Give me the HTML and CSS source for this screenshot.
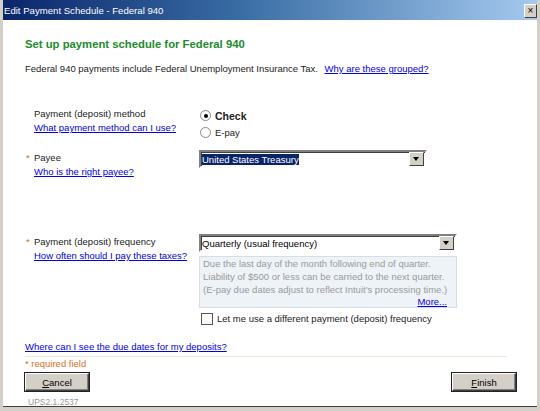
FILE: index.html
```html
<!DOCTYPE html>
<html lang="en">
  <head>
    <meta charset="UTF-8" />
    <title>Edit Payment Schedule - Federal 940</title>
    <link rel="stylesheet" href="styles.css">
  </head>
  <body>
    <div class="window">
      <div class="titlebar">
        <span class="title">Edit Payment Schedule - Federal 940</span>
        <span class="close">&#215;</span>
      </div>

      <div class="content">
        <h1>Set up payment schedule for Federal 940</h1>
        <p class="intro">Federal 940 payments include Federal Unemployment Insurance Tax. <a href="#">Why are these grouped?</a></p>

        <div class="row method">
          <div class="label">
            <span>Payment (deposit) method</span>
            <a href="#">What payment method can I use?</a>
          </div>
          <div class="field">
            <div class="radio checked"><span class="dot"></span><b>Check</b></div>
            <div class="radio"><span class="dot"></span>E-pay</div>
          </div>
        </div>

        <div class="row payee">
          <div class="label">
            <span><i class="req">*</i>Payee</span>
            <a href="#">Who is the right payee?</a>
          </div>
          <div class="field">
            <div class="select short">
              <span class="value"><span class="hl">United States Treasury</span></span>
              <span class="arrow"></span>
            </div>
          </div>
        </div>

        <div class="row freq">
          <div class="label">
            <span><i class="req">*</i>Payment (deposit) frequency</span>
            <a href="#">How often should I pay these taxes?</a>
          </div>
          <div class="field">
            <div class="select">
              <span class="value">Quarterly (usual frequency)</span>
              <span class="arrow"></span>
            </div>
            <div class="info">
              <p>Due the last day of the month following end of quarter.</p>
              <p>Liability of $500 or less can be carried to the next quarter.</p>
              <p>(E-pay due dates adjust to reflect Intuit's processing time.)</p>
              <a href="#" class="more">More...</a>
            </div>
            <div class="check"><span class="box"></span>Let me use a different payment (deposit) frequency</div>
          </div>
        </div>

        <a href="#" class="due">Where can I see the due dates for my deposits?</a>
      </div>

      <div class="footer">
        <div class="required">* required field</div>
        <div class="buttons">
          <button><u>C</u>ancel</button>
          <button><u>F</u>inish</button>
        </div>
        <div class="version">UPS2.1.2537</div>
      </div>
    </div>
  </body>
</html>
```

FILE: styles.css
```css
body {
  margin: 0;
  padding: 0;
  font-family: "Liberation Sans", Arial, sans-serif;
  font-size: 9.5px;
  color: #222;
  background-color: white;
}

.window {
  width: 540px;
  height: 411px;
  box-sizing: border-box;
  border-left: 3px solid #d4d0c8;
  border-right: 3px solid #d4d0c8;
  border-bottom: 4px solid #d4d0c8;
  box-shadow: inset 0 -1px 0 #404040;
  background-color: white;
  overflow: hidden;
}

.titlebar {
  height: 20px;
  margin: 0 -3px;
  background: linear-gradient(to right, #0a246a, #3a6ea5 45%, #a6caf0);
  color: white;
  display: flex;
  align-items: center;
  justify-content: space-between;
  padding: 0 3px 0 4px;
}

.title {
  font-size: 9.6px;
}

.close {
  width: 11px;
  height: 12px;
  background-color: #d4d0c8;
  border: 1px solid;
  border-color: white #404040 #404040 white;
  color: black;
  font-size: 10px;
  line-height: 11px;
  text-align: center;
  margin-top: 2px;
}

.content {
  padding: 0 0 0 22px;
}

h1 {
  color: #1c8c2c;
  font-size: 11.3px;
  margin: 16px 0 0;
  line-height: 16px;
}

.intro {
  margin: 10px 0 0;
  line-height: 14px;
}

.intro a {
  margin-left: 4px;
}

a {
  color: #0000ee;
}

.row {
  display: flex;
}

.label {
  width: 165px;
  display: flex;
  flex-direction: column;
  align-items: flex-start;
  padding-left: 9px;
  line-height: 14px;
}

.req {
  font-style: normal;
  color: #e07020;
  margin-left: -8px;
  width: 8px;
  display: inline-block;
}

.method {
  margin-top: 31px;
}

.radio {
  display: flex;
  align-items: center;
  height: 17px;
  gap: 4px;
}

.radio b {
  font-size: 10.5px;
}

.dot {
  width: 9px;
  height: 9px;
  border-radius: 50%;
  border: 1px solid #888;
  background: white;
  position: relative;
  margin-left: 1px;
}

.checked .dot::after {
  content: "";
  position: absolute;
  left: 2.5px;
  top: 2.5px;
  width: 4px;
  height: 4px;
  border-radius: 50%;
  background: black;
}

.payee {
  margin-top: 9px;
}

.payee .label {
  padding-top: 1px;
}

.select {
  width: 258px;
  height: 18px;
  box-sizing: border-box;
  border: 2px solid;
  border-color: #808080 white white #808080;
  box-shadow: inset 1px 1px 0 #404040;
  display: flex;
  align-items: center;
  background: white;
  color: black;
}

.select.short {
  width: 228px;
}

.value {
  flex: 1;
  padding-left: 1px;
}

.hl {
  background-color: #0a246a;
  color: white;
}

.arrow {
  width: 13px;
  height: 12px;
  background-color: #d4d0c8;
  border: 1px solid;
  border-color: white #404040 #404040 white;
  margin-right: 1px;
  position: relative;
}

.arrow::after {
  content: "";
  position: absolute;
  left: 3px;
  top: 4px;
  border-left: 3px solid transparent;
  border-right: 3px solid transparent;
  border-top: 4px solid black;
}

.freq {
  margin-top: 55px;
}

.freq .label {
  padding-top: 1px;
}

.info {
  width: 258px;
  height: 52px;
  box-sizing: border-box;
  margin-top: 4px;
  background-color: #eef3f8;
  border: 1px solid #d8dde3;
  color: #9a9a9a;
  padding: 0 0 0 3px;
  line-height: 13px;
  display: flex;
  flex-direction: column;
}

.info p {
  margin: 0;
}

.more {
  align-self: flex-end;
  margin-right: 9px;
  line-height: 11px;
}

.check {
  display: flex;
  align-items: center;
  gap: 4px;
  margin-top: 4px;
  margin-left: 2px;
  line-height: 14px;
}

.box {
  width: 10px;
  height: 10px;
  border: 1px solid #555;
  background: white;
}

.due {
  display: block;
  margin-top: 14px;
  line-height: 14px;
}

.footer {
  margin: 2px 30px 0 22px;
  border-top: 1px solid #ece9d8;
}

.required {
  color: #e07020;
  line-height: 14px;
}

.buttons {
  display: flex;
  justify-content: space-between;
  margin-right: -9px;
  margin-top: 2px;
}

button {
  width: 64px;
  height: 18px;
  background-color: #d4d0c8;
  border: 1px solid;
  border-color: white #404040 #404040 white;
  box-shadow: inset -1px -1px 0 #808080, 0 0 0 1px #222;
  font-family: "Liberation Sans", Arial, sans-serif;
  font-size: 9.5px;
  color: black;
  padding: 0;
}

.version {
  color: #999;
  font-size: 8.5px;
  line-height: 10px;
  margin-left: 3px;
  margin-top: 6px;
}
```
